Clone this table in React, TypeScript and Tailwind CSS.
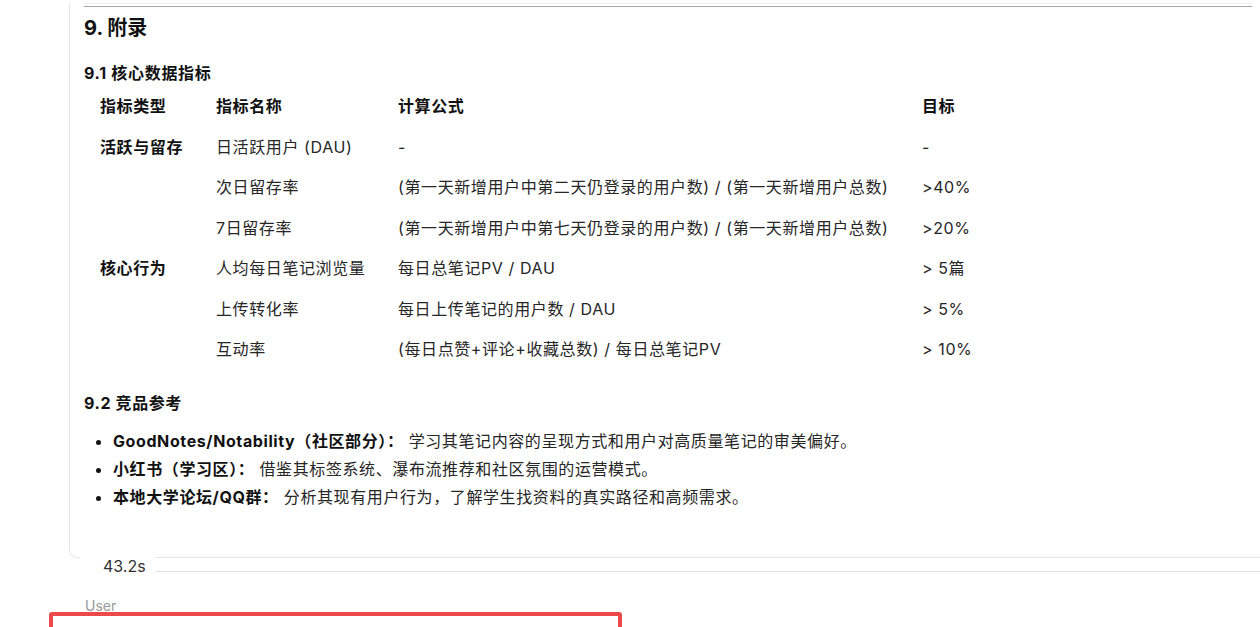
import React from 'react';

const rows = [
  { type: '活跃与留存', name: '日活跃用户 (DAU)', formula: '-', target: '-' },
  { type: '', name: '次日留存率', formula: '(第一天新增用户中第二天仍登录的用户数) / (第一天新增用户总数)', target: '>40%' },
  { type: '', name: '7日留存率', formula: '(第一天新增用户中第七天仍登录的用户数) / (第一天新增用户总数)', target: '>20%' },
  { type: '核心行为', name: '人均每日笔记浏览量', formula: '每日总笔记PV / DAU', target: '> 5篇' },
  { type: '', name: '上传转化率', formula: '每日上传笔记的用户数 / DAU', target: '> 5%' },
  { type: '', name: '互动率', formula: '(每日点赞+评论+收藏总数) / 每日总笔记PV', target: '> 10%' },
];

const refs = [
  { title: 'GoodNotes/Notability（社区部分）：', text: '学习其笔记内容的呈现方式和用户对高质量笔记的审美偏好。' },
  { title: '小红书（学习区）：', text: '借鉴其标签系统、瀑布流推荐和社区氛围的运营模式。' },
  { title: '本地大学论坛/QQ群：', text: '分析其现有用户行为，了解学生找资料的真实路径和高频需求。' },
];

const font = { fontFamily: 'Inter, "Noto Sans CJK SC", sans-serif' };

export default function App() {
  return (
    <div className="relative h-[627px] w-[1260px] overflow-hidden bg-white pt-[3px] text-[#262626]" style={font}>
      <div className="pl-[69px]">
        {/* response card, scrolled so only the end shows */}
        <div className="w-[1198px] rounded-b-lg border-x border-b border-t-0 border-[#e6e6e6] px-[14px] pb-[46px]">
          <div className="border-t border-[#f0f0f0] pt-[2px]">
            <div className="border-t border-[#a8a8a8]" />
          </div>
          <h2 className="mt-[7px] text-[20px] font-bold leading-[28px] text-[#111]">9. 附录</h2>
          <h3 className="mt-[19px] text-[16px] font-bold leading-6 tracking-[0.7px] text-[#111]">9.1 核心数据指标</h3>
          <div className="mt-px grid grid-cols-[116px_182px_524px_120px] text-[16px] tracking-[0.6px]">
            {['指标类型', '指标名称', '计算公式', '目标'].map(h => (
              <div key={h} className="flex h-[40.5px] items-center pl-4 font-bold text-[#111]">{h}</div>
            ))}
            {rows.map((r, i) => (
              <React.Fragment key={i}>
                <div className="flex h-[40.5px] items-center pl-4 font-bold text-[#111]">{r.type}</div>
                <div className="flex h-[40.5px] items-center whitespace-nowrap pl-4">{r.name}</div>
                <div className="flex h-[40.5px] items-center whitespace-nowrap pl-4">{r.formula}</div>
                <div className="flex h-[40.5px] items-center whitespace-nowrap pl-4">{r.target}</div>
              </React.Fragment>
            ))}
          </div>
          <h3 className="mt-[21px] text-[16px] font-bold leading-6 tracking-[0.6px] text-[#111]">9.2 竞品参考</h3>
          <ul className="mt-[12px] list-disc pl-[29px] text-[16px] leading-[28px] tracking-[0.6px]">
            {refs.map(r => (
              <li key={r.title} className="marker:text-[#111]">
                <span className="font-bold text-[#111]">{r.title}</span> {r.text}
              </li>
            ))}
          </ul>
        </div>

        {/* timing divider */}
        <div className="-mt-[4px] flex">
          <div className="ml-[11px] w-[75px] bg-white pl-[23px] text-[16px] leading-6 text-[#333]">43.2s</div>
          <div className="mt-[17px] flex-1 border-t border-[#e3e3e3]" />
        </div>
      </div>

      <div className="mt-[18px] pl-[85px] text-[14px] leading-5 text-[#9a9a9a]">User</div>

      {/* highlight annotation */}
      <div className="absolute left-[49px] top-[612px] h-[40px] w-[573px] rounded-[3px] border-[4px] border-[#ec4a4a]" />
    </div>
  );
}
